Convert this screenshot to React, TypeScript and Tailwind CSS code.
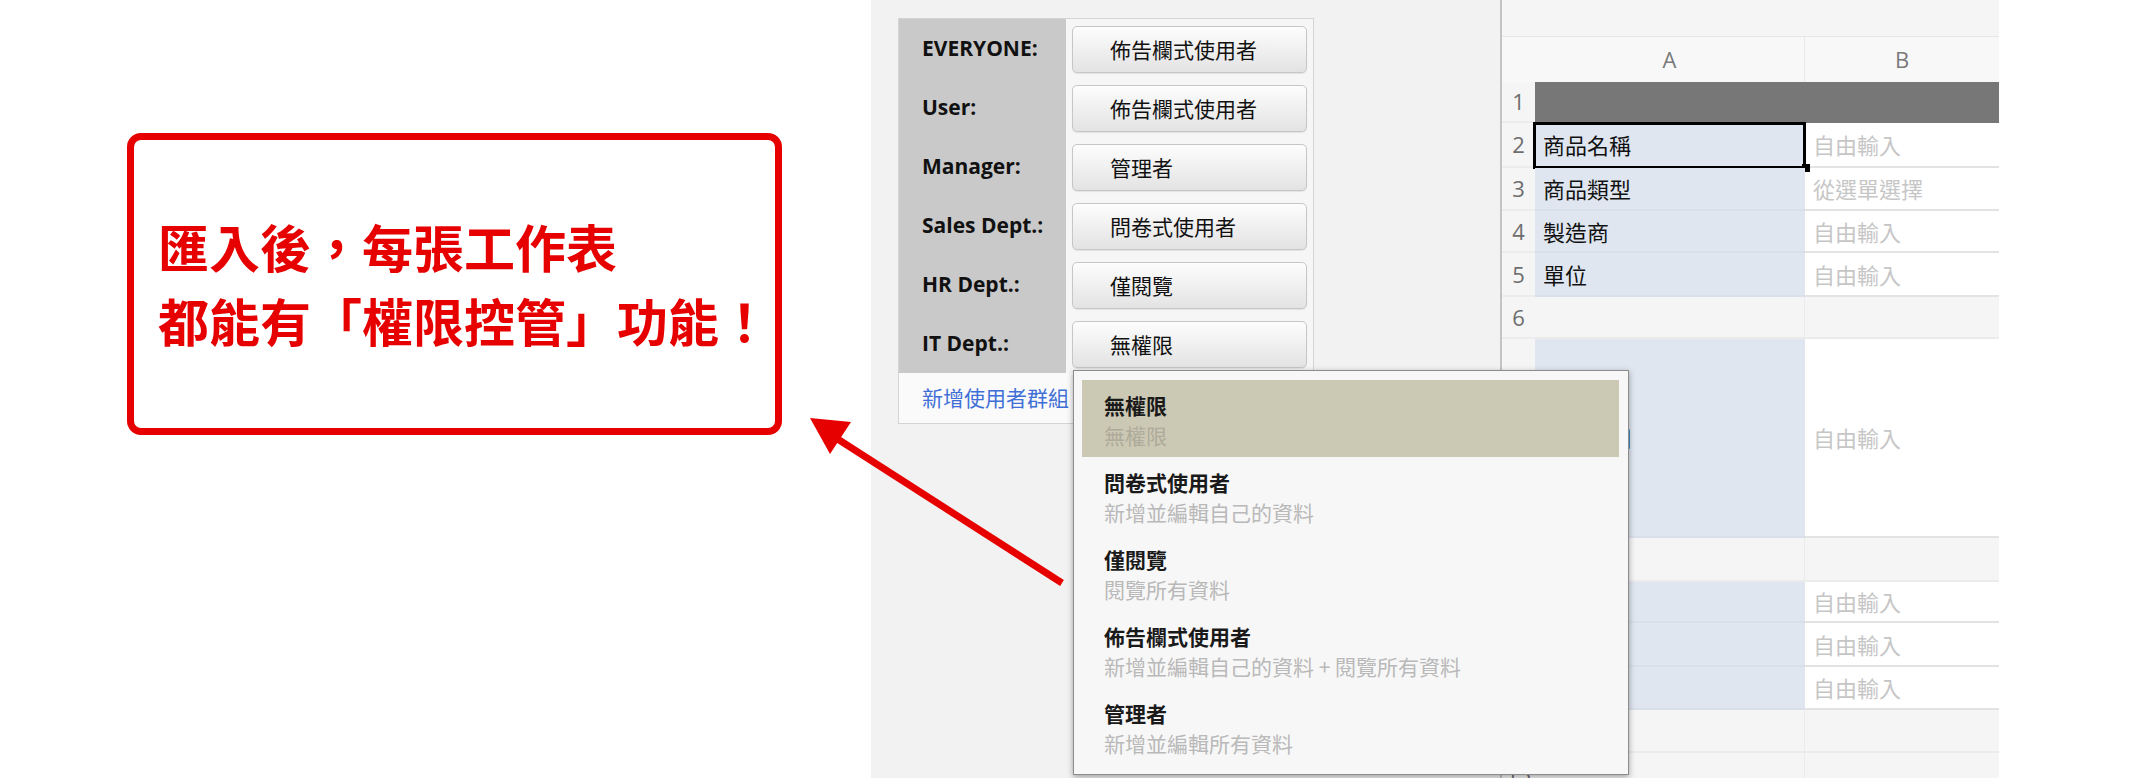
import clsx from "clsx";

const CJK = "font-['Noto_Sans_CJK_TC',sans-serif]";
const LATIN = "font-['Open_Sans','Noto_Sans_CJK_TC',sans-serif]";

const groups = [
  { label: "EVERYONE:", role: "佈告欄式使用者" },
  { label: "User:", role: "佈告欄式使用者" },
  { label: "Manager:", role: "管理者" },
  { label: "Sales Dept.:", role: "問卷式使用者" },
  { label: "HR Dept.:", role: "僅閱覽" },
  { label: "IT Dept.:", role: "無權限" },
];

const roles = [
  { title: "無權限", desc: "無權限" },
  { title: "問卷式使用者", desc: "新增並編輯自己的資料" },
  { title: "僅閱覽", desc: "閱覽所有資料" },
  { title: "佈告欄式使用者", desc: "新增並編輯自己的資料 + 閱覽所有資料" },
  { title: "管理者", desc: "新增並編輯所有資料" },
];

type Row = { n: number; h: number; kind: "dark" | "empty" | "data"; a?: string; b?: string };

const rows: Row[] = [
  { n: 1, h: 41, kind: "dark" },
  { n: 2, h: 45, kind: "data", a: "商品名稱", b: "自由輸入" },
  { n: 3, h: 43, kind: "data", a: "商品類型", b: "從選單選擇" },
  { n: 4, h: 42, kind: "data", a: "製造商", b: "自由輸入" },
  { n: 5, h: 44, kind: "data", a: "單位", b: "自由輸入" },
  { n: 6, h: 42, kind: "empty" },
  { n: 7, h: 199, kind: "data", a: "商品說明", b: "自由輸入" },
  { n: 8, h: 44, kind: "empty" },
  { n: 9, h: 41, kind: "data", b: "自由輸入" },
  { n: 10, h: 44, kind: "data", b: "自由輸入" },
  { n: 11, h: 43, kind: "data", b: "自由輸入" },
  { n: 12, h: 43, kind: "empty" },
  { n: 13, h: 43, kind: "empty" },
];

function Callout() {
  return (
    <div className="flex h-[302px] w-[655px] items-center rounded-[14px] border-[7px] border-[#e60000] bg-white pl-[24px] pb-[2px]">
      <div className={clsx(CJK, "text-[51px] font-bold leading-[74px] text-[#e60000]")}>
        <div>匯入後，每張工作表</div>
        <div>都能有「權限控管」功能！</div>
      </div>
    </div>
  );
}

function PermissionPanel() {
  return (
    <div className="w-[416px] border border-[#d4d4d4] bg-[#f6f6f6]">
      {groups.map((g) => (
        <div key={g.label} className="flex h-[59px]">
          <div className={clsx(LATIN, "flex w-[167px] items-start bg-[#c9c9c9] pl-[23px] pt-[15px] text-[21px] font-bold leading-[29px] text-[#111]")}>
            {g.label}
          </div>
          <div className="flex-1 px-[6px] pt-[7px]">
            <div className={clsx(CJK, "flex h-[47px] items-center rounded-[5px] border border-[#c6c6c6] bg-gradient-to-b from-[#fdfdfd] to-[#e3e3e3] pl-[37px] text-[21px] text-[#111] shadow-[0_1px_1px_rgba(0,0,0,0.08)]")}>
              {g.role}
            </div>
          </div>
        </div>
      ))}
      <div className={clsx(CJK, "flex h-[50px] items-center bg-[#fafafa] pl-[23px] text-[21px] text-[#3f6fd6]")}>
        新增使用者群組
      </div>
    </div>
  );
}

function RoleMenu() {
  return (
    <div className="absolute left-[1073px] top-[370px] h-[405px] w-[556px] border border-[#8c8c8c] bg-[#f7f7f7] pl-[8px] pr-[9px] pt-[9px] shadow-[0_2px_6px_rgba(0,0,0,0.35)]">
      {roles.map((r, i) => (
        <div key={r.title} className={clsx("h-[77px] pl-[22px] pt-[10px]", i === 0 && "bg-[#cbc8b4]")}>
          <div className={clsx(CJK, "text-[21px] font-bold leading-[30px] text-[#1a1a1a]")}>{r.title}</div>
          <div className={clsx(CJK, "text-[21px] leading-[30px]", i === 0 ? "text-[#aeab9b]" : "text-[#b9b9b9]")}>{r.desc}</div>
        </div>
      ))}
    </div>
  );
}

function Sheet() {
  return (
    <div className="w-[499px] shrink-0 border-l-2 border-[#c4c4c4] bg-[#f5f5f5]">
      <div className="h-[37px] border-b border-[#e6e6e6] bg-[#f5f5f5]" />
      <div className={clsx(LATIN, "grid h-[45px] grid-cols-[33px_270px_194px] bg-[#f8f8f8] text-[22px] text-[#7a7a7a]")}>
        <div />
        <div className="flex items-center justify-center border-r border-[#e8e8e8]">A</div>
        <div className="flex items-center justify-center">B</div>
      </div>
      {rows.map((r) => (
        <div key={r.n} className="grid grid-cols-[33px_270px_194px]" style={{ height: r.h }}>
          <div className={clsx(LATIN, "flex items-center justify-center border-b-2 border-[#ececec] bg-[#f5f5f5] text-[22px] text-[#6e6e6e]")}>
            {r.n}
          </div>
          {r.kind === "dark" && <div className="col-span-2 bg-[#777777]" />}
          {r.kind === "empty" && (
            <>
              <div className="border-b-2 border-r border-[#ebebeb] bg-[#f5f5f5]" />
              <div className="border-b-2 border-[#ebebeb] bg-[#f5f5f5]" />
            </>
          )}
          {r.kind === "data" && (
            <>
              <div className={clsx(CJK, "relative flex items-center border-b-2 border-[#d9e0e9] bg-[#dfe6ef] pl-[8px] text-[22px] text-[#111]")}>
                {r.a}
                {r.n === 2 && (
                  <>
                    <div className="absolute -left-[2px] -top-[1px] h-[47px] w-[273px] border-[3px] border-black" />
                    <div className="absolute -bottom-[6px] -right-[5px] h-[8px] w-[8px] bg-black" />
                  </>
                )}
              </div>
              <div className={clsx(CJK, "flex items-center border-b-2 border-[#e3e3e3] bg-white pl-[8px] text-[22px] text-[#c6c6c6]")}>
                {r.b}
              </div>
            </>
          )}
        </div>
      ))}
    </div>
  );
}

function Arrow() {
  return (
    <svg className="pointer-events-none absolute left-0 top-0" width="2147" height="778">
      <line x1="1062" y1="583" x2="836" y2="438" stroke="#e60000" strokeWidth="7" />
      <polygon points="810,418 851,422 830,454" fill="#e60000" />
    </svg>
  );
}

export default function App() {
  return (
    <div className="relative flex h-[778px] w-[2147px] overflow-hidden bg-white">
      <div className="w-[871px] shrink-0 pl-[127px] pt-[133px]">
        <Callout />
      </div>
      <div className="w-[629px] shrink-0 bg-[#f2f2f2] pl-[27px] pt-[18px]">
        <PermissionPanel />
      </div>
      <Sheet />
      <div className="flex-1 bg-white" />
      <RoleMenu />
      <Arrow />
    </div>
  );
}
